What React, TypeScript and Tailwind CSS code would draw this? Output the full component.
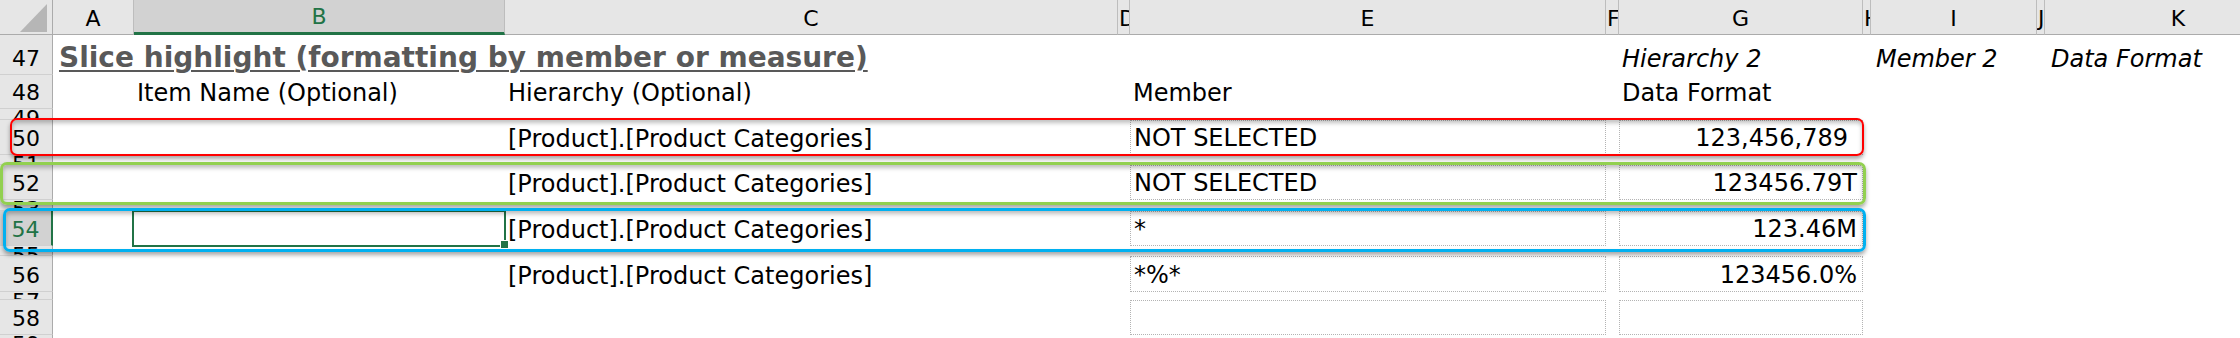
import React from 'react';

// --- Sheet geometry (px) ---
const COLS = ['A', 'B', 'C', 'D', 'E', 'F', 'G', 'H', 'I', 'J', 'K'];
const NARROW = ['D', 'F', 'H', 'J'];

type RowDef = { n: number; short?: boolean };

const ROWS: RowDef[] = [
  { n: 47 }, { n: 48 }, { n: 49, short: true }, { n: 50 }, { n: 51, short: true },
  { n: 52 }, { n: 53, short: true }, { n: 54 }, { n: 55, short: true }, { n: 56 },
  { n: 57, short: true }, { n: 58 }, { n: 59, short: true },
];

const SLICES: Record<number, { member: string; format: string; hierarchy: boolean; spaced?: boolean }> = {
  50: { member: 'NOT SELECTED', format: '123,456,789', hierarchy: true, spaced: true },
  52: { member: 'NOT SELECTED', format: '123456.79T', hierarchy: true },
  54: { member: '*', format: '123.46M', hierarchy: true },
  56: { member: '*%*', format: '123456.0%', hierarchy: true },
  58: { member: '', format: '', hierarchy: false },
};

const SELECTED_COL = 'B';
const SELECTED_ROW = 54;

const txt = 'flex items-end pl-[3px] pb-[2px] text-[24px] leading-[28px] whitespace-nowrap text-black';
const dotted = 'border border-dotted border-[#b3b3b3]';

function ColHeader({ col }: { col: string }) {
  const sel = col === SELECTED_COL;
  const narrow = NARROW.includes(col);
  return (
    <div
      className={`flex items-end overflow-hidden pb-[2px] text-[22px] leading-[26px] border-r border-[#bdbdbd] ${
        narrow ? 'justify-start pl-[1px]' : 'justify-center'
      } ${sel ? 'bg-[#d2d2d2] text-[#217346] border-b-[3px] border-b-[#217346]' : 'bg-[#e6e6e6] text-black border-b border-b-[#ababab]'}`}
    >
      {col}
    </div>
  );
}

function RowHeader({ row }: { row: RowDef }) {
  const sel = row.n === SELECTED_ROW;
  return (
    <div
      className={`flex justify-center overflow-hidden text-[22px] leading-[26px] border-b border-[#d0d0d0] ${
        row.short ? 'items-start' : 'items-end pb-[2px]'
      } ${sel ? 'bg-[#d2d2d2] text-[#217346] border-r-2 border-r-[#217346]' : 'bg-[#e6e6e6] text-black border-r border-r-[#ababab]'}`}
    >
      <span className={row.short ? '-mt-[3px]' : ''}>{row.n}</span>
    </div>
  );
}

function cellsFor(n: number): React.ReactNode[] {
  const cells: React.ReactNode[] = COLS.map((c) => <div key={c} />);

  if (n === 47) {
    cells[0] = (
      <div key="A" className="flex items-end pl-[6px] pb-[1px] whitespace-nowrap">
        <span className="text-[28px] leading-[33px] font-bold text-[#595959] underline decoration-2 underline-offset-[3px]">
          Slice highlight (formatting by member or measure)
        </span>
      </div>
    );
    cells[6] = <div key="G" className={`${txt} italic`}>Hierarchy 2</div>;
    cells[8] = <div key="I" className={`${txt} italic pl-[5px]`}>Member 2</div>;
    cells[10] = <div key="K" className={`${txt} italic pl-[6px]`}>Data Format</div>;
  }

  if (n === 48) {
    cells[1] = <div key="B" className={txt}>Item Name (Optional)</div>;
    cells[2] = <div key="C" className={txt}>Hierarchy (Optional)</div>;
    cells[4] = <div key="E" className={txt}>Member</div>;
    cells[6] = <div key="G" className={txt}>Data Format</div>;
  }

  const s = SLICES[n];
  if (s) {
    if (s.hierarchy) cells[2] = <div key="C" className={txt}>[Product].[Product Categories]</div>;
    cells[4] = <div key="E" className={`${txt} ${dotted}`}>{s.member}</div>;
    cells[6] = (
      <div key="G" className={`${txt} ${dotted} justify-end ${s.spaced ? 'pr-[14px]' : 'pr-[5px]'}`}>
        {s.format}
      </div>
    );
  }

  return cells;
}

export default function App() {
  return (
    <div className="relative h-[338px] w-[2240px] overflow-hidden bg-white font-['DejaVu_Sans',sans-serif]">
      <div className="grid w-[2312px] grid-cols-[53px_81px_371px_613px_12px_476px_13px_244px_8px_166px_8px_267px] grid-rows-[35px_40px_34px_11px_35px_10px_35px_11px_35px_10px_36px_8px_35px_20px]">
        {/* Corner */}
        <div className="relative bg-[#e6e6e6] border-r border-b border-[#ababab]">
          <svg className="absolute inset-0" width="53" height="35" viewBox="0 0 53 35">
            <polygon points="20,32 47,32 47,4" fill="#b6b6b6" />
          </svg>
        </div>
        {COLS.map((c) => (
          <ColHeader key={c} col={c} />
        ))}

        {ROWS.map((row) => (
          <React.Fragment key={row.n}>
            <RowHeader row={row} />
            {cellsFor(row.n)}
          </React.Fragment>
        ))}
      </div>

      {/* Active cell B54 */}
      <div className="absolute left-[132px] top-[210px] h-[37px] w-[374px] border-2 border-[#217346]" />
      <div className="absolute left-[500px] top-[240px] h-[9px] w-[9px] bg-[#217346] border border-white" />

      {/* Highlight annotations */}
      <div className="absolute left-[10px] top-[118px] h-[38px] w-[1854px] rounded-[7px] border-2 border-[#ff0000] shadow-[0_3px_4px_rgba(0,0,0,0.35),inset_0_3px_4px_rgba(0,0,0,0.25)]" />
      <div className="absolute left-0 top-[162px] h-[43px] w-[1866px] rounded-[7px] border-[3px] border-[#92d050] shadow-[0_3px_4px_rgba(0,0,0,0.35),inset_0_3px_4px_rgba(0,0,0,0.25)]" />
      <div className="absolute left-[3px] top-[208px] h-[44px] w-[1863px] rounded-[7px] border-[3px] border-[#00b0f0] shadow-[0_3px_4px_rgba(0,0,0,0.35),inset_0_3px_4px_rgba(0,0,0,0.25)]" />
    </div>
  );
}
